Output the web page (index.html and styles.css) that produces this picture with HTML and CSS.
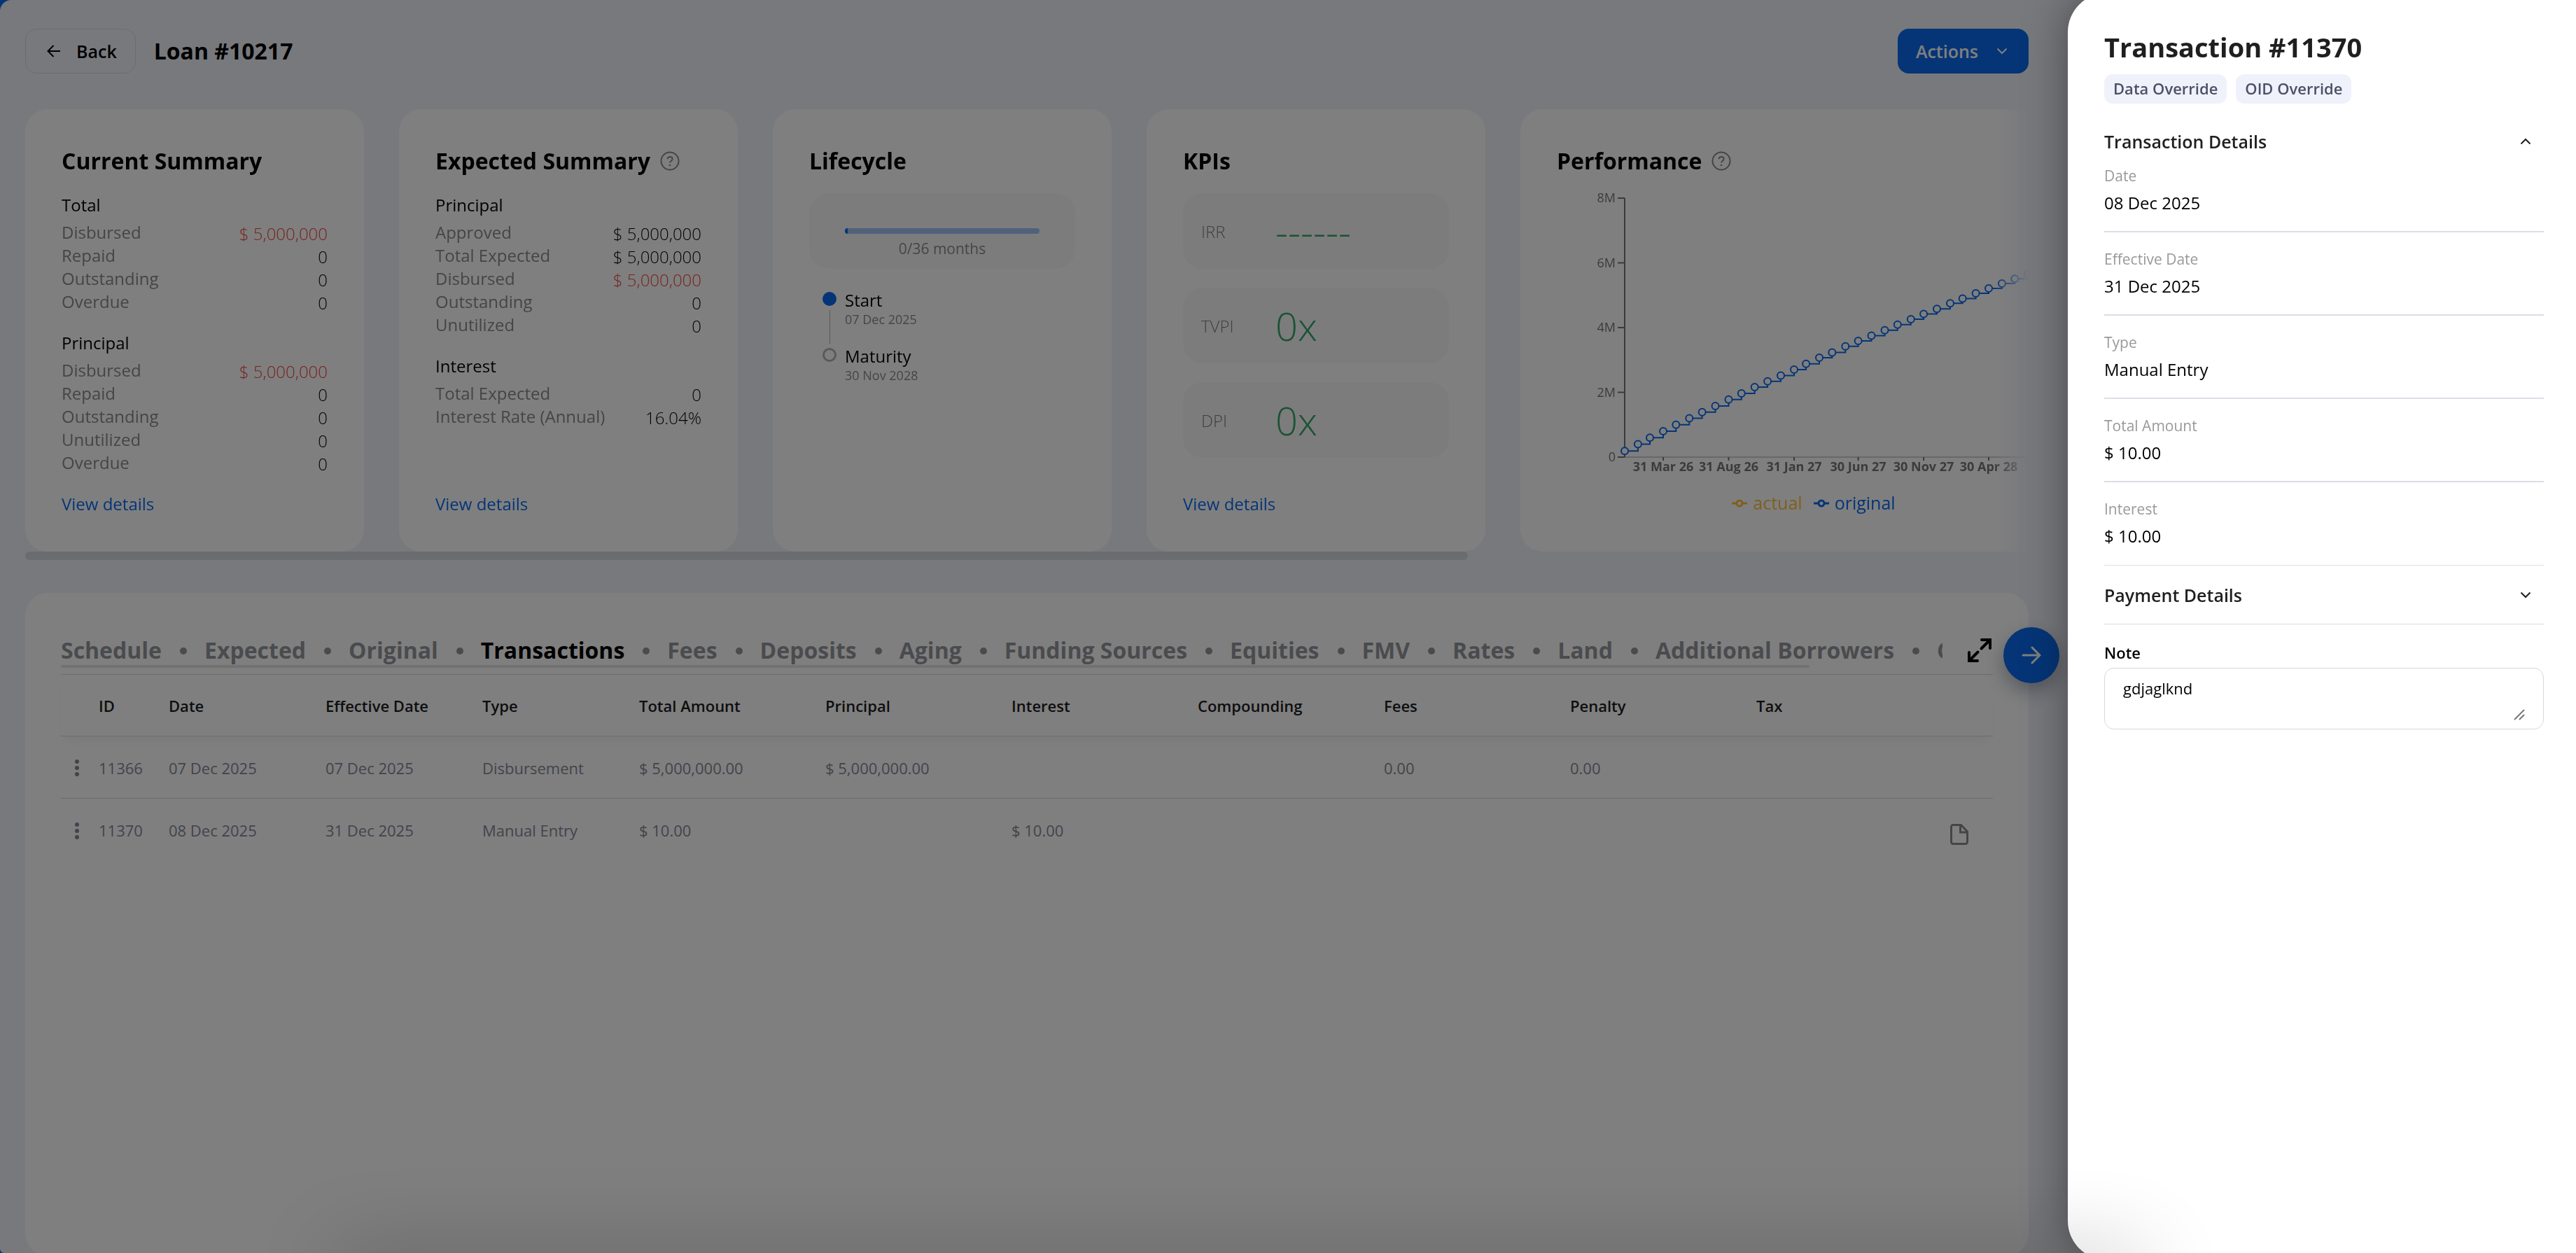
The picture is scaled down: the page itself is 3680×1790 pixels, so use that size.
FILE: index.html
```html
<!DOCTYPE html>
<html lang="en">
<head>
  <meta charset="UTF-8">
  <meta name="viewport" content="width=device-width, initial-scale=1.0">
  <title>Loan #10217</title>
  <link rel="stylesheet" href="styles.css">
</head>
<body>
  <main class="page">
    <header class="page-header">
      <button type="button" class="btn btn-back">
        <svg class="icon-arrow" viewBox="0 0 20 20"><path d="M19 10H2M9.500 2 1.500 10l8 8"/></svg>
        Back
      </button>
      <h1>Loan #10217</h1>
      <button type="button" class="btn btn-primary">
        Actions
        <svg class="icon-chevron" viewBox="0 0 16 10"><path d="M1.500 1.500 8 8l6.500-6.500"/></svg>
      </button>
    </header>

    <div class="summary">
      <div class="cards">
        <section class="card">
          <h2>Current Summary</h2>
          <h3>Total</h3>
          <dl class="rows">
            <div class="row"><dt>Disbursed</dt><dd class="negative">$ 5,000,000</dd></div>
            <div class="row"><dt>Repaid</dt><dd>0</dd></div>
            <div class="row"><dt>Outstanding</dt><dd>0</dd></div>
            <div class="row"><dt>Overdue</dt><dd>0</dd></div>
          </dl>
          <h3>Principal</h3>
          <dl class="rows">
            <div class="row"><dt>Disbursed</dt><dd class="negative">$ 5,000,000</dd></div>
            <div class="row"><dt>Repaid</dt><dd>0</dd></div>
            <div class="row"><dt>Outstanding</dt><dd>0</dd></div>
            <div class="row"><dt>Unutilized</dt><dd>0</dd></div>
            <div class="row"><dt>Overdue</dt><dd>0</dd></div>
          </dl>
          <a href="#" class="card-link">View details</a>
        </section>

        <section class="card">
          <h2>Expected Summary
            <svg class="icon-help" viewBox="0 0 28 28"><circle cx="14" cy="14" r="12.500"/><path d="M10.500 11.200c.3-2 1.700-3.200 3.600-3.200 2 0 3.500 1.300 3.500 3.200 0 2.500-3.600 2.900-3.600 5.300"/><circle class="dot" cx="14" cy="20" r="1.300"/></svg>
          </h2>
          <h3>Principal</h3>
          <dl class="rows">
            <div class="row"><dt>Approved</dt><dd>$ 5,000,000</dd></div>
            <div class="row"><dt>Total Expected</dt><dd>$ 5,000,000</dd></div>
            <div class="row"><dt>Disbursed</dt><dd class="negative">$ 5,000,000</dd></div>
            <div class="row"><dt>Outstanding</dt><dd>0</dd></div>
            <div class="row"><dt>Unutilized</dt><dd>0</dd></div>
          </dl>
          <h3>Interest</h3>
          <dl class="rows">
            <div class="row"><dt>Total Expected</dt><dd>0</dd></div>
            <div class="row"><dt>Interest Rate (Annual)</dt><dd>16.04%</dd></div>
          </dl>
          <a href="#" class="card-link">View details</a>
        </section>

        <section class="card">
          <h2>Lifecycle</h2>
          <div class="tile progress-tile">
            <div class="progress"><div class="progress-bar" style="width: 1.5%"></div></div>
            <span>0/36 months</span>
          </div>
          <ol class="timeline">
            <li class="done">
              <strong>Start</strong>
              <span>07 Dec 2025</span>
            </li>
            <li>
              <strong>Maturity</strong>
              <span>30 Nov 2028</span>
            </li>
          </ol>
        </section>

        <section class="card">
          <h2>KPIs</h2>
          <div class="kpis">
            <div class="tile kpi"><span>IRR</span><b>------</b></div>
            <div class="tile kpi"><span>TVPI</span><b>0x</b></div>
            <div class="tile kpi"><span>DPI</span><b>0x</b></div>
          </div>
          <a href="#" class="card-link">View details</a>
        </section>

        <section class="card card-wide">
          <h2>Performance
            <svg class="icon-help" viewBox="0 0 28 28"><circle cx="14" cy="14" r="12.500"/><path d="M10.500 11.200c.3-2 1.700-3.200 3.600-3.200 2 0 3.500 1.300 3.500 3.200 0 2.500-3.600 2.900-3.600 5.300"/><circle class="dot" cx="14" cy="20" r="1.300"/></svg>
          </h2>
          <svg class="chart" id="chart" viewBox="0 0 734 426"></svg>
          <div class="legend">
            <span class="legend-actual"><svg viewBox="0 0 22 12"><path d="M0 6h7M15 6h7"/><circle cx="11" cy="6" r="4"/></svg>actual</span>
            <span class="legend-original"><svg viewBox="0 0 22 12"><path d="M0 6h7M15 6h7"/><circle cx="11" cy="6" r="4"/></svg>original</span>
          </div>
        </section>
      </div>
      <div class="scroll-thumb"></div>
    </div>

    <section class="panel">
      <div class="panel-head">
        <nav class="tabs">
          <a href="#">Schedule</a>
          <a href="#">Expected</a>
          <a href="#">Original</a>
          <a href="#" class="active">Transactions</a>
          <a href="#">Fees</a>
          <a href="#">Deposits</a>
          <a href="#">Aging</a>
          <a href="#">Funding Sources</a>
          <a href="#">Equities</a>
          <a href="#">FMV</a>
          <a href="#">Rates</a>
          <a href="#">Land</a>
          <a href="#">Additional Borrowers</a>
          <a href="#">Collateral</a>
        </nav>
        <button type="button" class="btn-icon" aria-label="Full screen">
          <svg class="icon-expand" viewBox="0 0 34 34"><path d="M20 2h12v12M31 3 19.500 14.500M14 32H2V20M3 31l11.500-11.500"/></svg>
        </button>
      </div>
      <div class="tabs-thumb"></div>

      <table class="transactions">
        <colgroup>
          <col class="col-menu"><col class="col-id">
          <col class="col-text"><col class="col-text"><col class="col-text">
          <col class="col-money"><col class="col-money"><col class="col-money"><col class="col-money"><col class="col-money"><col class="col-money"><col class="col-money">
          <col class="col-doc">
        </colgroup>
        <thead>
          <tr>
            <th></th><th>ID</th><th>Date</th><th>Effective Date</th><th>Type</th><th>Total Amount</th><th>Principal</th><th>Interest</th><th>Compounding</th><th>Fees</th><th>Penalty</th><th>Tax</th><th></th>
          </tr>
        </thead>
        <tbody>
          <tr>
            <td><button type="button" class="btn-menu" aria-label="Row menu"><i></i><i></i><i></i></button></td>
            <td>11366</td><td>07 Dec 2025</td><td>07 Dec 2025</td><td>Disbursement</td><td>$ 5,000,000.00</td><td>$ 5,000,000.00</td><td></td><td></td><td>0.00</td><td>0.00</td><td></td><td></td>
          </tr>
          <tr>
            <td><button type="button" class="btn-menu" aria-label="Row menu"><i></i><i></i><i></i></button></td>
            <td>11370</td><td>08 Dec 2025</td><td>31 Dec 2025</td><td>Manual Entry</td><td>$ 10.00</td><td></td><td>$ 10.00</td><td></td><td></td><td></td><td></td>
            <td><svg class="icon-doc" viewBox="0 0 26 30"><path d="M15.500 1.500H4A2.500 2.500 0 0 0 1.500 4v22A2.500 2.500 0 0 0 4 28.500h18a2.500 2.500 0 0 0 2.500-2.500V11zM14.500 1.500V12h10"/></svg></td>
          </tr>
        </tbody>
      </table>
    </section>

    <button type="button" class="fab" aria-label="Next">
      <svg viewBox="0 0 28 28"><path d="M2 14h24M15 3l11 11-11 11"/></svg>
    </button>
    <div class="backdrop"></div>
  </main>

  <aside class="drawer">
    <h2>Transaction #11370</h2>
    <div class="tags">
      <span class="tag">Data Override</span>
      <span class="tag">OID Override</span>
    </div>

    <button type="button" class="accordion">
      Transaction Details
      <svg class="icon-chevron" viewBox="0 0 16 10"><path d="M1.500 8.500 8 2l6.500 6.500"/></svg>
    </button>
    <dl class="details">
      <div><dt>Date</dt><dd>08 Dec 2025</dd></div>
      <div><dt>Effective Date</dt><dd>31 Dec 2025</dd></div>
      <div><dt>Type</dt><dd>Manual Entry</dd></div>
      <div><dt>Total Amount</dt><dd>$ 10.00</dd></div>
      <div><dt>Interest</dt><dd>$ 10.00</dd></div>
    </dl>

    <button type="button" class="accordion accordion-closed">
      Payment Details
      <svg class="icon-chevron" viewBox="0 0 16 10"><path d="M1.500 1.500 8 8l6.500-6.500"/></svg>
    </button>

    <div class="note">
      <label for="note">Note</label>
      <div class="note-box">
        <textarea id="note" rows="1">gdjaglknd</textarea>
        <svg class="icon-grip" viewBox="0 0 16 16"><path d="M1 15 15 1M8 15l7-7"/></svg>
      </div>
    </div>
  </aside>
  <div class="bottom-shadow"></div>

  <script src="chart.js"></script>
</body>
</html>
```

FILE: styles.css
```css
* {
  box-sizing: border-box;
}

body {
  margin: 0;
  display: grid;
  grid-template-columns: 1fr 726px;
  height: 100vh;
  overflow: hidden;
  background: #0a6aee;
  color: #000;
  font-family: "Open Sans", "Noto Sans", sans-serif;
  font-size: 24px;
  line-height: 33px;
}

h1, h2, h3, dl, dd, ol {
  margin: 0;
  padding: 0;
}

h1, h2 {
  font-size: 32px;
  line-height: 44px;
  font-weight: 700;
}

button {
  font: inherit;
  color: inherit;
  border: none;
  background: none;
  padding: 0;
  cursor: pointer;
}

a {
  text-decoration: none;
}

svg {
  fill: none;
  stroke: currentColor;
  stroke-width: 2;
  flex: none;
}

/* Page, it runs on under the drawer's rounded corners */
.page {
  position: relative;
  min-width: 0;
  height: 100vh;
  margin-right: -80px;
  padding: 41px 136px 0 36px;
  background: #f1f3fb;
  border-radius: 16px 0 0 6px;
  display: flex;
  flex-direction: column;
}

.backdrop {
  position: fixed;
  inset: 0;
  background: rgba(0, 0, 0, 0.5);
}

.page-header {
  display: flex;
  align-items: center;
  gap: 26px;
  margin-bottom: 51px;
}

.page-header .btn-primary {
  margin-left: auto;
}

.btn {
  display: flex;
  align-items: center;
  height: 64px;
  border-radius: 16px;
  padding: 0 26px;
  font-size: 25px;
  font-weight: 600;
}

.btn-back {
  gap: 22px;
  padding: 0 26px 0 30px;
  border: 1px solid #d5d8e2;
}

.btn-primary {
  gap: 26px;
  padding-right: 30px;
  background: #0a6aee;
  color: #fff;
}

.icon-arrow {
  width: 20px;
  height: 20px;
}

.icon-chevron {
  width: 16px;
  height: 10px;
}

/* Summary cards */
.cards {
  display: flex;
  gap: 50px;
  overflow: hidden;
  mask-image: linear-gradient(to right, #000 calc(100% - 50px), transparent);
}

.card {
  flex: 0 0 484px;
  display: flex;
  flex-direction: column;
  padding: 52px;
  border-radius: 32px;
  background: #fff;
}

.card-wide {
  flex-basis: 838px;
}

.card h2 {
  display: flex;
  align-items: center;
  gap: 14px;
  margin-bottom: 24px;
}

.card h3 {
  margin-bottom: 6px;
  font-size: 24px;
  line-height: 33px;
  font-weight: 400;
}

.icon-help {
  width: 28px;
  height: 28px;
  color: #8a8a8a;
}

.icon-help .dot {
  fill: currentColor;
  stroke: none;
}

.rows {
  margin-bottom: 26px;
}

.row {
  display: flex;
  justify-content: space-between;
  height: 33px;
}

.row dt {
  color: #8a8a8a;
}

.row dd {
  padding-top: 2px;
  font-weight: 300;
}

.row .negative {
  color: #f0443c;
}

.card-link {
  margin-top: auto;
  color: #0a6aee;
}

.tile {
  height: 108px;
  border-radius: 28px;
  background: #f9f9f9;
}

.progress-tile {
  padding: 50px 51px 0;
  color: #8a8a8a;
  font-size: 21px;
  text-align: center;
}

.progress {
  height: 8px;
  margin-bottom: 5px;
  border-radius: 4px;
  background: #a0c3f8;
  overflow: hidden;
}

.progress-bar {
  height: 100%;
  background: #0a6aee;
}

.timeline {
  list-style: none;
  margin-top: 28px;
  padding-left: 51px;
}

.timeline li {
  position: relative;
  display: flex;
  flex-direction: column;
  height: 80px;
}

/* marker and the line that joins it to the next step */
.timeline li::before {
  content: "";
  position: absolute;
  left: -32px;
  top: 5px;
  box-sizing: border-box;
  width: 20px;
  height: 20px;
  border: 3px solid #b4b4b4;
  border-radius: 50%;
}

.timeline .done::before {
  border-color: #0a6aee;
  background: #0a6aee;
}

.timeline .done::after {
  content: "";
  position: absolute;
  left: -22px;
  top: 31px;
  width: 1px;
  height: 48px;
  background: #b4b4b4;
}

.timeline strong {
  font-weight: 400;
}

.timeline span {
  color: #8a8a8a;
  font-size: 18px;
  line-height: 22px;
}

.kpis {
  display: flex;
  flex-direction: column;
  gap: 27px;
}

.kpi {
  display: grid;
  grid-template-columns: 106px 1fr;
  align-items: center;
  padding: 0 26px;
}

.kpi span {
  color: #808080;
  font-weight: 300;
}

.kpi b {
  color: #36a56c;
  font-size: 56px;
  line-height: 76px;
  font-weight: 300;
}

.chart {
  width: 100%;
  overflow: visible;
  color: #777;
}

.chart text {
  fill: #777;
  stroke: none;
  font-size: 18px;
}

.chart .x-label {
  font-weight: 700;
  text-anchor: middle;
}

.chart .y-label {
  text-anchor: end;
}

.chart .x-axis {
  stroke: #d0d0d0;
}

.chart .series,
.chart .point {
  stroke: #0a6aee;
}

.chart .point {
  fill: #fff;
}

.legend {
  display: flex;
  justify-content: center;
  gap: 16px;
  font-size: 25px;
}

.legend span {
  display: flex;
  align-items: center;
  gap: 8px;
}

.legend svg {
  width: 22px;
  height: 12px;
  stroke-width: 3;
}

.legend-actual {
  color: #ffbf3f;
}

.legend-original {
  color: #0a6aee;
}

.scroll-thumb {
  width: 72%;
  height: 12px;
  border-radius: 6px;
  background: #d6d8e0;
}

/* Transactions panel */
.panel {
  flex: none;
  height: calc(100vh - 843px);
  min-height: 700px;
  margin-top: 47px;
  padding: 60px 51px 0;
  border-radius: 32px;
  background: #fff;
}

.panel-head {
  display: flex;
  justify-content: space-between;
  align-items: center;
}

.tabs {
  display: flex;
  width: calc(100% - 72px);
  height: 43px;
  overflow: hidden;
}

.tabs a {
  display: flex;
  align-items: center;
  color: #94979c;
  font-size: 32px;
  line-height: 44px;
  font-weight: 700;
  white-space: nowrap;
}

.tabs .active {
  color: #000;
}

.tabs a + a::before {
  content: "";
  width: 10px;
  height: 10px;
  margin: 2px 25px 0 26px;
  border-radius: 50%;
  background: #94979c;
}

.btn-icon {
  margin-right: 2px;
}

.icon-expand {
  display: block;
  width: 34px;
  height: 34px;
  stroke-width: 4;
  stroke-linecap: round;
}

.tabs-thumb {
  width: 90.5%;
  height: 4px;
  margin-bottom: 9px;
  border-radius: 2px;
  background: #e2e2e2;
}

.transactions {
  width: 100%;
  table-layout: fixed;
  border-collapse: separate;
  border-spacing: 0;
  font-size: 22px;
}

.col-menu { width: 54px; }
.col-id { width: 100px; }
.col-text { width: 224px; }
.col-money { width: 266px; }
.col-doc { width: 72px; }

.transactions th,
.transactions td {
  height: 89px;
  padding: 2px 0 0;
  text-align: left;
  border-bottom: 1px solid #d5d8e2;
}

.transactions th {
  border-top: 1px solid #d5d8e2;
  color: #1c1c1e;
  font-weight: 600;
}

.transactions thead {
  box-shadow: 0 12px 16px -6px rgba(0, 0, 0, 0.05);
}

.transactions td {
  color: #858997;
}

.transactions tr:last-child td {
  border-bottom: none;
}

.btn-menu {
  display: flex;
  flex-direction: column;
  gap: 3px;
  width: 6px;
  margin-left: 20px;
}

.btn-menu i {
  width: 6px;
  height: 6px;
  border-radius: 50%;
  background: #858997;
}

.icon-doc {
  display: block;
  width: 26px;
  height: 30px;
  margin: 10px 0 0 11px;
  color: #8a8a8a;
  stroke-width: 3;
}

.fab {
  position: absolute;
  right: 92px;
  top: 896px;
  display: flex;
  align-items: center;
  justify-content: center;
  width: 80px;
  height: 80px;
  border-radius: 50%;
  background: #0a6aee;
  color: #fff;
  box-shadow: 0 12px 28px rgba(20, 40, 70, 0.35);
}

.fab svg {
  width: 28px;
  height: 28px;
  stroke-width: 3;
  stroke-linecap: round;
}

/* Drawer */
.drawer {
  position: relative;
  margin: -10px 0;
  padding: 50px 46px 0 52px;
  background: #fff;
  border-radius: 56px 0 0 56px;
  box-shadow: 0 0 64px rgba(0, 0, 0, 0.4);
  color: #1f1f1f;
}

.drawer h2 {
  font-size: 38px;
  line-height: 54px;
}

.tags {
  display: flex;
  gap: 13px;
  margin-top: 12px;
}

.tag {
  height: 42px;
  padding: 0 13px;
  border-radius: 12px;
  background: #eff2fa;
  color: #4b5069;
  font-size: 22px;
  line-height: 40px;
  font-weight: 600;
}

.accordion {
  display: flex;
  justify-content: space-between;
  align-items: center;
  width: 100%;
  margin-top: 36px;
  padding-right: 18px;
  font-size: 25px;
  line-height: 36px;
  font-weight: 600;
}

.accordion-closed {
  height: 84px;
  margin-top: 0;
  border-bottom: 1px solid #d9dbe4;
}

.details > div {
  height: 119px;
  padding-top: 23px;
  border-bottom: 2px solid #dcdee6;
}

.details > div:first-child {
  height: 112px;
  padding-top: 16px;
}

.details > div:last-child {
  border-bottom-width: 1px;
}

.details dt {
  color: #999;
  font-size: 21px;
  line-height: 30px;
}

.details dd {
  margin-top: 7px;
  color: #000;
}

.note {
  margin-top: 24px;
  color: #000;
}

.note label {
  display: block;
  margin-bottom: 6px;
  font-size: 22px;
  line-height: 32px;
  font-weight: 600;
}

.note-box {
  display: flex;
  align-items: flex-end;
  height: 88px;
  padding: 12px 26px;
  border: 1px solid #d5d8e2;
  border-radius: 14px;
}

.note textarea {
  flex: 1;
  height: 100%;
  padding: 0;
  border: none;
  outline: none;
  resize: none;
  font: inherit;
  font-size: 22px;
}

.icon-grip {
  width: 16px;
  height: 16px;
  color: #777;
}

/* shade cast from below the fold */
.bottom-shadow {
  position: fixed;
  left: 480px;
  right: 620px;
  bottom: -60px;
  height: 60px;
  box-shadow: 0 0 120px rgba(0, 0, 0, 0.24);
}
```

FILE: chart.js
```js
// Cumulative original cash flow per month end, in millions
const values = [
  0.19, 0.40, 0.60, 0.80, 1.00, 1.20, 1.39, 1.58, 1.78, 1.97, 2.16,
  2.34, 2.52, 2.70, 2.88, 3.07, 3.23, 3.42, 3.59, 3.75, 3.92, 4.09,
  4.26, 4.42, 4.58, 4.75, 4.90, 5.06, 5.21, 5.36, 5.51, 5.67, 5.80,
  5.93, 6.06, 6.19
];
const xLabels = {
  3: '31 Mar 26', 8: '31 Aug 26', 13: '31 Jan 27',
  18: '30 Jun 27', 23: '30 Nov 27', 28: '30 Apr 28'
};

const chart = document.getElementById('chart');
const left = 97;
const top_ = 7;
const bottom = 377;
const right = 734;
const pxPerDay = 0.611;

// Last day of the month, counted in days from 31 Dec 2025
function monthEnd(n) {
  return (Date.UTC(2026, n, 0) - Date.UTC(2026, 0, 0)) / 86400000;
}

function x(n) {
  return Math.round((left + monthEnd(n) * pxPerDay) * 10) / 10;
}

function y(v) {
  return Math.round((bottom - v / 8 * (bottom - top_)) * 10) / 10;
}

let svg = `<path class="x-axis" d="M${left} ${bottom}H${right}"/>`;
svg += `<path d="M${left} ${top_}V${bottom}"/>`;

[0, 2, 4, 6, 8].forEach(v => {
  svg += `<path d="M${left - 10} ${y(v)}H${left}"/>`;
  svg += `<text class="y-label" x="${left - 13}" y="${y(v) + 6}">${v ? v + 'M' : 0}</text>`;
});

Object.keys(xLabels).forEach(n => {
  svg += `<path d="M${x(+n)} ${bottom}v5"/>`;
  svg += `<text class="x-label" x="${x(+n)}" y="${bottom + 20}">${xLabels[n]}</text>`;
});

// Step line: hold the value until the next month end
let d = `M${x(0)} ${y(values[0])}`;
values.forEach((v, n) => {
  d += `H${x(n)}V${y(v)}`;
});
svg += `<path class="series" d="${d}"/>`;

values.forEach((v, n) => {
  svg += `<circle class="point" cx="${x(n)}" cy="${y(v)}" r="5"/>`;
});

chart.innerHTML = svg;
```
